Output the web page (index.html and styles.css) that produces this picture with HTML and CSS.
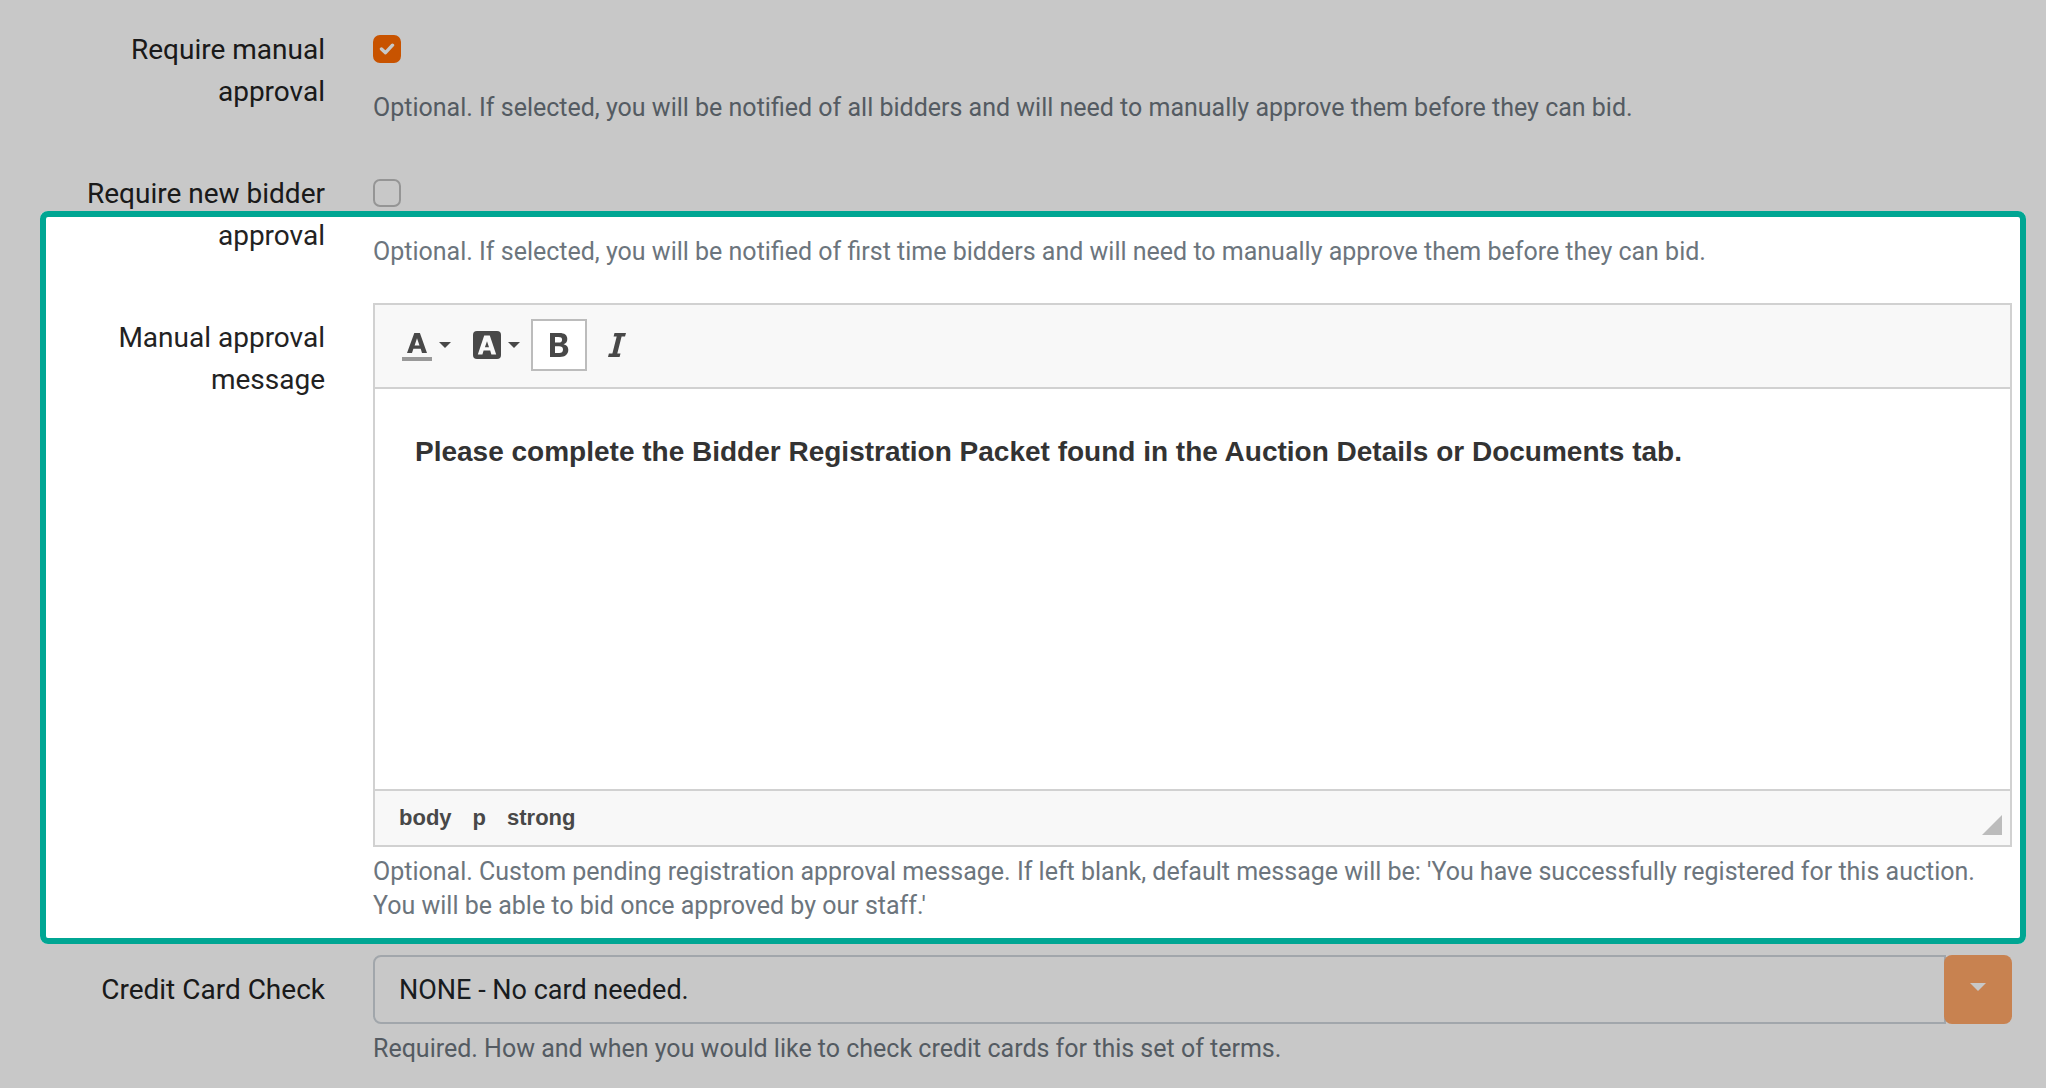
FILE: index.html
```html
<!DOCTYPE html>
<html lang="en">
<head>
<meta charset="utf-8">
<title>Auction terms</title>
<meta name="viewport" content="width=device-width, initial-scale=1">
<link rel="stylesheet" href="styles.css">
</head>
<body>
<form class="terms-form">
  <div class="row">
    <label class="label" for="manual">Require manual approval</label>
    <div class="field field-check">
      <input class="check" type="checkbox" id="manual" checked aria-describedby="manual-help">
      <p class="help" id="manual-help">Optional. If selected, you will be notified of all bidders and will need to manually approve them before they can bid.</p>
    </div>
  </div>

  <div class="row">
    <label class="label" for="new-bidder">Require new bidder approval</label>
    <div class="field field-check">
      <input class="check" type="checkbox" id="new-bidder" aria-describedby="new-bidder-help">
      <p class="help" id="new-bidder-help">Optional. If selected, you will be notified of first time bidders and will need to manually approve them before they can bid.</p>
    </div>
  </div>

  <div class="row row-highlight">
    <span class="label" id="message-label">Manual approval message</span>
    <div class="field">
      <div class="editor">
        <div class="toolbar" role="toolbar" aria-label="Formatting">
          <button class="tool tool-menu" type="button" aria-label="Text color">
            <svg width="30" height="32" viewBox="0 0 30 32" aria-hidden="true">
              <path fill="#484848" fill-rule="evenodd" d="M12.3 4h5.600l7.100 20h-5l-1.300-4.200h-7.300L10 24H5zM15 9.200l-2.400 7.200h4.900z"/>
              <path fill="#999" d="M0 28h30v4H0z"/>
            </svg>
            <svg width="12" height="6" viewBox="0 0 12 6" aria-hidden="true"><path fill="#484848" d="M0 0h12L6 6z"/></svg>
          </button>
          <button class="tool tool-menu" type="button" aria-label="Background color">
            <svg width="28" height="30" viewBox="0 0 28 30" aria-hidden="true">
              <rect y="1" width="28" height="28" rx="4" fill="#484848"/>
              <path fill="#f8f8f8" fill-rule="evenodd" d="M11.2 5.6h5.6l6.4 18.8h-4.8l-1.2-3.8h-6.6l-1.2 3.8H4.8zM14 11.2l-2.1 6h4.1z"/>
            </svg>
            <svg width="12" height="6" viewBox="0 0 12 6" aria-hidden="true"><path fill="#484848" d="M0 0h12L6 6z"/></svg>
          </button>
          <button class="tool tool-toggle is-on" type="button" aria-label="Bold" aria-pressed="true">
            <svg width="20" height="24" viewBox="0 0 20 24" aria-hidden="true">
              <path fill="#484848" fill-rule="evenodd" d="M1 0h9.500c5 0 7.800 2 7.800 6 0 2.700-1.400 4.700-3.800 5.200 3 .5 4.800 2.400 4.800 5.600 0 4.600-3.200 7.200-8.400 7.200H1zM6 4v5.500h3.600c2.300 0 3.500-.8 3.500-2.800S11.900 4 9.500 4zm0 9.200V20h4.200c2.500 0 3.800-1.100 3.800-3.500 0-2.300-1.400-3.300-4-3.300z"/>
            </svg>
          </button>
          <button class="tool tool-toggle" type="button" aria-label="Italic" aria-pressed="false">
            <svg width="18" height="24" viewBox="0 0 18 24" aria-hidden="true">
              <path fill="#484848" d="M6.500 0H18l-1 3.600h-3.400L9.300 20.400h3.200l-.9 3.600H0l.9-3.600h3.500L8.700 3.600H5.600z"/>
            </svg>
          </button>
        </div>
        <div class="content" contenteditable="true" role="textbox" aria-multiline="true" aria-labelledby="message-label" aria-describedby="message-help" spellcheck="false"><p><strong>Please complete the Bidder Registration Packet found in the Auction Details or Documents tab.</strong></p></div>
        <div class="status">
          <nav class="path" aria-label="Elements path">
            <a href="#body">body</a>
            <a href="#p">p</a>
            <a href="#strong">strong</a>
          </nav>
          <svg class="grip" width="20" height="20" viewBox="0 0 20 20" aria-hidden="true"><path fill="#bcbcbc" d="M20 0v20H0z"/></svg>
        </div>
      </div>
      <p class="help help-below" id="message-help">Optional. Custom pending registration approval message. If left blank, default message will be: 'You have successfully registered for this auction. You will be able to bid once approved by our staff.'</p>
    </div>
  </div>

  <div class="row">
    <label class="label" for="card-check">Credit Card Check</label>
    <div class="field">
      <div class="select-group">
        <select class="select" id="card-check" aria-describedby="card-help">
          <option>NONE - No card needed.</option>
        </select>
        <button class="select-button" type="button" aria-label="Show options">
          <svg width="16" height="8" viewBox="0 0 16 8" aria-hidden="true"><path fill="#fff" d="M0 0h16L8 8z"/></svg>
        </button>
      </div>
      <p class="help help-below" id="card-help">Required. How and when you would like to check credit cards for this set of terms.</p>
    </div>
  </div>
</form>
</body>
</html>
```
FILE: styles.css
```css
*, *::before, *::after { box-sizing: border-box; }

body {
  margin: 0;
  background: #fff;
  color: #212529;
  font: 28px/42px Roboto, sans-serif;
}

p { margin: 0; }

button { font: inherit; cursor: pointer; }

.terms-form {
  min-height: 100vh;
  padding: 15px 34px 0 40px;
}

.row {
  display: grid;
  grid-template-columns: 285px minmax(0, 1fr);
  column-gap: 48px;
}

.label {
  padding-top: 14px;
  color: #222;
  text-align: right;
}

.field-check {
  height: 144px;
  padding-top: 20px;
}

.check {
  appearance: none;
  display: block;
  width: 28px;
  height: 28px;
  margin: 0 0 28px;
  border: 2px solid #bfbfbf;
  border-radius: 7px;
  background: #fff;
}

.check:checked {
  border-color: #ff6a00;
  background: #ff6a00 url("data:image/svg+xml,%3Csvg xmlns='http://www.w3.org/2000/svg' viewBox='0 0 16 12'%3E%3Cpath d='M2.500 6l4 3.700L13.500 2.200' fill='none' stroke='white' stroke-width='3.400' stroke-linecap='round' stroke-linejoin='round'/%3E%3C/svg%3E") center / 16px 12px no-repeat;
}

.help {
  color: #6c757d;
  font-size: 25px;
  line-height: 34px;
}

.help-below { padding-top: 8px; }

/* Spotlight: dims everything outside the frame */
.row-highlight {
  position: relative;
  padding-bottom: 32px;
}

.row-highlight::after {
  content: "";
  position: absolute;
  inset: -92px -14px 11px 0;
  border: 6px solid #00a693;
  border-radius: 8px;
  box-shadow: 0 0 0 9999px rgba(0, 0, 0, 0.216);
  pointer-events: none;
}

.editor { border: 2px solid #d1d1d1; }

.toolbar {
  display: flex;
  align-items: center;
  padding: 14px 16px 16px;
  border-bottom: 2px solid #d1d1d1;
  background: #f8f8f8;
}

.tool {
  display: flex;
  align-items: center;
  justify-content: center;
  height: 52px;
  padding: 0;
  border: 2px solid transparent;
  background: none;
}

.tool-menu { width: 70px; gap: 7px; }

.tool-toggle { width: 56px; margin-right: 2px; }

.is-on {
  border-color: #bcbcbc;
  background: #fff;
}

.content {
  height: 400px;
  padding: 40px;
  color: #333;
  font: 28px/45px "Liberation Sans", Arial, sans-serif;
  outline: none;
}

.status {
  display: flex;
  align-items: flex-end;
  justify-content: space-between;
  height: 56px;
  padding: 0 8px 10px 24px;
  border-top: 2px solid #d1d1d1;
  background: #f8f8f8;
}

.path {
  display: flex;
  gap: 21px;
  font: bold 22px/34px "Liberation Sans", Arial, sans-serif;
}

.path a { color: #484848; text-decoration: none; }

.select-group { display: flex; }

.select {
  appearance: none;
  flex: 1;
  min-width: 0;
  height: 69px;
  margin: 0 -2px 0 0;
  padding: 0 24px;
  border: 2px solid #ced4da;
  border-radius: 8px 0 0 8px;
  background: #fff;
  color: #212529;
  font: inherit;
  font-size: 27px;
}

.select-button {
  width: 68px;
  padding: 0 0 6px;
  border: 0;
  border-radius: 8px;
  background: #ffa666;
}

.select-button svg { display: block; margin: 0 auto; }
```
